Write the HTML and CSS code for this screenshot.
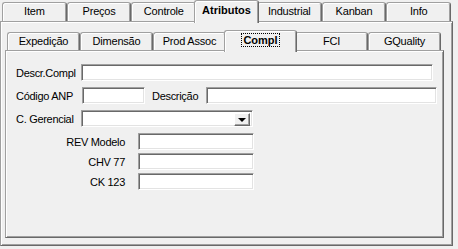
FILE: index.html
```html
<!DOCTYPE html>
<html lang="pt">
<head>
  <meta charset="UTF-8">
  <title>Cadastro - Atributos</title>
  <link rel="stylesheet" href="styles.css">
</head>
<body>
  <div class="pages">
    <div class="tab-strip">
      <div class="tab">Item</div>
      <div class="tab">Preços</div>
      <div class="tab">Controle</div>
      <div class="tab active">Atributos</div>
      <div class="tab">Industrial</div>
      <div class="tab">Kanban</div>
      <div class="tab">Info</div>
    </div>
    <div class="page">
      <div class="tab-strip inner-strip">
        <div class="tab">Expedição</div>
        <div class="tab">Dimensão</div>
        <div class="tab">Prod Assoc</div>
        <div class="tab active"><span class="focus">Compl</span></div>
        <div class="tab">FCI</div>
        <div class="tab">GQuality</div>
      </div>
      <div class="page inner-page">
        <div class="row">
          <label class="lbl">Descr.Compl</label>
          <input type="text" class="edit descr">
        </div>
        <div class="row">
          <label class="lbl">Código ANP</label>
          <input type="text" class="edit anp">
          <label class="lbl-mid">Descrição</label>
          <input type="text" class="edit desc">
        </div>
        <div class="row">
          <label class="lbl">C. Gerencial</label>
          <div class="combo">
            <div class="combo-text"></div>
            <div class="combo-btn"><span class="arrow"></span></div>
          </div>
        </div>
        <div class="extra">
          <div class="row small">
            <label class="lbl-right">REV Modelo</label>
            <input type="text" class="edit short">
          </div>
          <div class="row small">
            <label class="lbl-right">CHV 77</label>
            <input type="text" class="edit short">
          </div>
          <div class="row small">
            <label class="lbl-right">CK 123</label>
            <input type="text" class="edit short">
          </div>
        </div>
      </div>
    </div>
  </div>
</body>
</html>
```
FILE: styles.css
```css
body {
  margin: 0;
  background-color: #f0f0f0;
  font-family: "Liberation Sans", Arial, sans-serif;
  font-size: 11px;
  color: #000;
}
.pages {
  width: 453px;
}
.tab-strip {
  display: flex;
  align-items: flex-end;
  height: 21px;
  padding-left: 2px;
  width: 449px;
  position: relative;
  z-index: 2;
}
.tab {
  flex: 1;
  height: 19px;
  box-sizing: border-box;
  border-top: 1px solid #a0a0a0;
  border-left: 1px solid #a0a0a0;
  border-right: 1px solid #696969;
  border-radius: 3px 3px 0 0;
  box-shadow: inset 1px 1px #fff, inset -1px 0 #a0a0a0;
  background: #f0f0f0;
  text-align: center;
  line-height: 17px;
  letter-spacing: -0.2px;
}
.tab.active {
  height: 23px;
  margin: 0 -2px -2px;
  font-weight: bold;
  position: relative;
  z-index: 3;
  line-height: 19px;
  letter-spacing: 0;
}
.page {
  box-sizing: border-box;
  height: 225px;
  border-top: 1px solid #a0a0a0;
  border-left: 1px solid #a0a0a0;
  border-right: 1px solid #696969;
  border-bottom: 1px solid #696969;
  box-shadow: inset 1px 1px #fff, inset -1px -1px #a0a0a0;
  padding: 8px 7px 6px 4px;
  position: relative;
  z-index: 1;
}
.inner-strip {
  width: 434px;
  height: 20px;
  padding-left: 2px;
}
.inner-strip .tab {
  height: 18px;
  line-height: 16px;
}
.inner-strip .tab.active {
  height: 22px;
  line-height: 18px;
}
.focus {
  outline: 1px dotted #000;
  padding: 0 1px;
}
.inner-page {
  width: 439px;
  height: 188px;
  padding: 13px 0 0 10px;
}
.row {
  display: flex;
  align-items: center;
  height: 17px;
  margin-bottom: 6px;
  letter-spacing: -0.3px;
}
.lbl {
  width: 65px;
}
.lbl-mid {
  margin-left: 7px;
  width: 54px;
}
.lbl-right {
  width: 109px;
  text-align: right;
  margin-right: 13px;
}
.edit, .combo {
  box-sizing: border-box;
  height: 17px;
  margin: 0;
  padding: 0;
  background: #fff;
  border: 1px solid;
  border-color: #a0a0a0 #fff #fff #a0a0a0;
  box-shadow: inset 1px 1px #696969, inset -1px -1px #e3e3e3;
  outline: none;
}
.descr {
  width: 352px;
}
.anp {
  width: 63px;
  margin-left: 1px;
}
.desc {
  width: 231px;
}
.combo {
  width: 172px;
  display: flex;
  padding: 2px;
}
.combo-text {
  flex: 1;
}
.combo-btn {
  box-sizing: border-box;
  width: 16px;
  height: 13px;
  background: #f0f0f0;
  border-top: 1px solid #fff;
  border-left: 1px solid #fff;
  border-right: 1px solid #696969;
  border-bottom: 1px solid #696969;
  box-shadow: inset -1px -1px #a0a0a0;
  display: flex;
  align-items: center;
  justify-content: center;
}
.arrow {
  width: 0;
  height: 0;
  border-left: 4px solid transparent;
  border-right: 4px solid transparent;
  border-top: 4px solid #000;
}
.extra {
  margin-top: 3px;
}
.row.small {
  margin-bottom: 3px;
}
.short {
  width: 116px;
}
```
